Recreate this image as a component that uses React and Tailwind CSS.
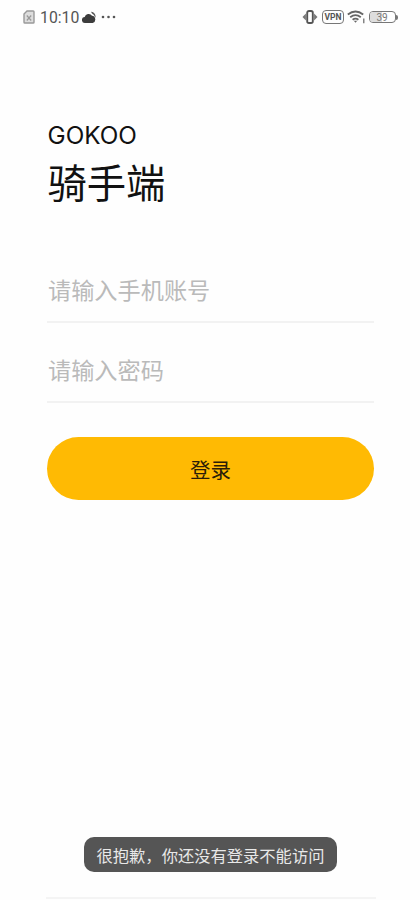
import React, { useState } from 'react'

export default function App() {
  const [phone, setPhone] = useState('')
  const [password, setPassword] = useState('')

  return (
    <div className="relative h-[900px] w-[420px] overflow-hidden bg-[#fefefe] font-['Noto_Sans_CJK_SC',sans-serif] text-[#111111]">
      <StatusBar />

      <main className="ml-[47px] w-[327px]">
        <h1 className="pt-[85px] pl-[0.5px]">
          <span className="block h-[32px] font-[Inter,sans-serif] text-[24.3px] leading-[32px]">GOKOO</span>
          <span className="mt-[5px] block h-[50px] text-[39.3px] leading-[50px]">骑手端</span>
        </h1>

        <form className="mt-[37px]" onSubmit={(e) => e.preventDefault()}>
          <Field placeholder="请输入手机账号" value={phone} onChange={setPhone} />
          <Field type="password" placeholder="请输入密码" value={password} onChange={setPassword} />
          <button
            type="submit"
            className="mt-[34px] block h-[63px] w-full rounded-full bg-[#ffba03] pt-[2px] text-[20.5px] text-[#2a1d08]"
          >
            登录
          </button>
        </form>
      </main>

      <div className="absolute top-[837px] left-[84px] flex h-[35px] w-[253px] items-center justify-center rounded-[10px] bg-[#555555] pt-[2px] text-[16.3px] whitespace-nowrap text-[#e8e8e8]">
        很抱歉，你还没有登录不能访问
      </div>
      <div className="absolute top-[897px] left-[46px] h-[2px] w-[330px] bg-[#f4f4f4]" />
    </div>
  )
}

function Field({ type = 'text', placeholder, value, onChange }) {
  return (
    <div className="h-[80px] border-b-2 border-[#f2f2f2] pt-[28px]">
      <input
        type={type}
        placeholder={placeholder}
        value={value}
        onChange={(e) => onChange(e.target.value)}
        className="block h-[36px] w-full bg-transparent pl-px text-[23.2px] leading-[36px] outline-none placeholder:text-[#bababa]"
      />
    </div>
  )
}

function StatusBar() {
  return (
    <header className="flex h-[34px] items-center justify-between pr-[22px] pl-[23px] text-[#555555]">
      <div className="flex items-center">
        {/* sim card */}
        <svg className="h-[14px] w-[12px]" viewBox="0 0 12 14" fill="none" stroke="#999999">
          <path d="M4 1h6.2q.8 0 .8.8v10.4q0 .8-.8.8H1.8q-.8 0-.8-.8V4z" fill="#dddddd" strokeWidth="1.4" />
          <path d="M3.8 5.5l4.4 5M8.2 5.5l-4.4 5" strokeWidth="1.2" />
        </svg>
        <span className="ml-[5px] w-[39px] pt-px font-[Roboto,sans-serif] text-[15.8px] leading-[20px] whitespace-nowrap">
          10:10
        </span>
        {/* weather */}
        <svg className="ml-[3px] h-[13px] w-[14px]" viewBox="0 0 14 13">
          <path d="M3.2 12a3 3 0 0 1-.5-6A4 4 0 0 1 10 4.8a3.7 3.7 0 0 1 .7 7.2z" fill="#3c3c3c" />
          <path d="M9 .8a4.4 4.4 0 0 1 4.2 6q-.8-3.4-3.2-4.2z" fill="#555555" />
        </svg>
        <svg className="ml-[5px] h-[4px] w-[15px]" viewBox="0 0 15 4" fill="#555555">
          <circle cx="2" cy="2" r="1.3" />
          <circle cx="7.5" cy="2" r="1.3" />
          <circle cx="13" cy="2" r="1.3" />
        </svg>
      </div>

      <div className="flex items-center">
        {/* vibrate */}
        <svg className="h-[14px] w-[16px]" viewBox="0 0 16 14">
          <rect x="5.2" y="1" width="5.6" height="12" rx="1.8" fill="none" stroke="#555555" strokeWidth="1.9" />
          <path d="M3.9 3.5v7L.5 7zM12.1 3.5v7L15.5 7z" fill="#777777" />
        </svg>
        <div className="ml-[4px] flex h-[14px] w-[22px] items-center justify-center rounded-[4px] border border-[#777777] font-[Roboto,sans-serif] text-[8.5px] leading-none font-bold">
          VPN
        </div>
        {/* wifi */}
        <svg className="ml-[3px] h-[14px] w-[19px]" viewBox="0 0 19 14" fill="none" stroke="#666666">
          <path d="M.8 4.5q7.7-6 15.4 0M3.2 7.2q5.3-4.2 10.6 0M5.6 9.8q2.9-2.4 5.8 0" strokeWidth="1.8" />
          <path d="M6.8 10.8h3.4l-1.7 2z" fill="#666666" stroke="none" />
          <path d="M16.8 8.5v4.7" strokeWidth="1.2" />
        </svg>
        {/* battery */}
        <div className="ml-[3px] flex items-center">
          <div className="flex h-[12px] w-[27px] rounded-[4px] border border-[#777777] font-[Roboto,sans-serif] text-[10px] leading-[11px] text-[#777777]">
            <span className="h-full w-[12px] rounded-l-[3px] bg-[#dddddd] text-right">3</span>
            <span>9</span>
          </div>
          <div className="h-[5px] w-[2px] rounded-r-full bg-[#777777]" />
        </div>
      </div>
    </header>
  )
}
